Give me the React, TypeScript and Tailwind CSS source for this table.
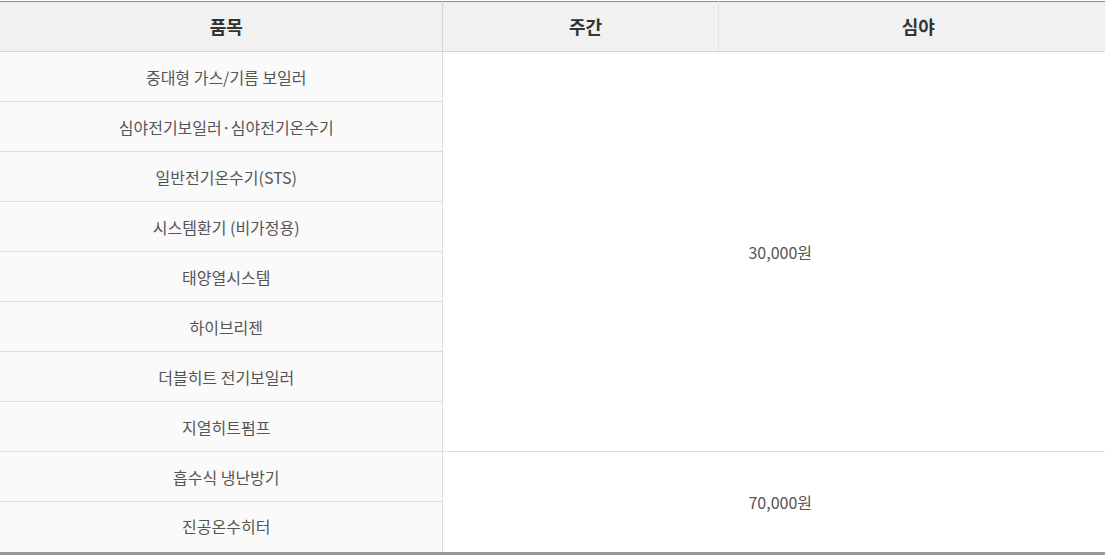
import React from "react";

const groupA = [
  "중대형 가스/기름 보일러",
  "심야전기보일러·심야전기온수기",
  "일반전기온수기(STS)",
  "시스템환기 (비가정용)",
  "태양열시스템",
  "하이브리젠",
  "더블히트 전기보일러",
  "지열히트펌프",
];

const groupB = ["흡수식 냉난방기", "진공온수히터"];

const itemCell =
  "bg-[#fafafa] pl-[11px] text-center text-[16px] text-[#555] border-r border-[#dcdcdc]";

const priceCell =
  "bg-white pl-[13px] text-center text-[16px] text-[#555] border-b border-[#dcdcdc]";

const App: React.FC = () => {
  return (
    <div
      className="w-[1105px] h-[556px] bg-white pt-[1px]"
      style={{ fontFamily: '"Noto Sans CJK KR", "Noto Sans", sans-serif' }}
    >
      <table className="w-full border-collapse table-fixed border-t border-t-[#8c8c8c] border-b-[3px] border-b-[#999]">
        <colgroup>
          <col className="w-[442px]" />
          <col className="w-[276px]" />
          <col />
        </colgroup>
        <thead>
          <tr className="h-[50px] bg-[#f1f1f1]">
            <th className="pl-[11px] text-[18px] font-bold text-[#333] border-b border-r border-[#d4d4d4]">
              품목
            </th>
            <th className="pl-[11px] text-[18px] font-bold text-[#333] border-b border-r border-b-[#d4d4d4] border-r-[#e2e2e2]">
              주간
            </th>
            <th className="pl-[13px] text-[18px] font-bold text-[#333] border-b border-[#d4d4d4]">
              심야
            </th>
          </tr>
        </thead>
        <tbody>
          {groupA.map((name, i) => (
            <tr key={name}>
              <td className={itemCell + " h-[50px] border-b"}>{name}</td>
              {i === 0 && (
                <td colSpan={2} rowSpan={groupA.length} className={priceCell}>
                  30,000원
                </td>
              )}
            </tr>
          ))}
          {groupB.map((name, i) => (
            <tr key={name}>
              <td
                className={
                  i === groupB.length - 1
                    ? itemCell + " h-[52px] pb-[2px]"
                    : itemCell + " h-[50px] border-b"
                }
              >
                {name}
              </td>
              {i === 0 && (
                <td colSpan={2} rowSpan={groupB.length} className={priceCell}>
                  70,000원
                </td>
              )}
            </tr>
          ))}
        </tbody>
      </table>
    </div>
  );
};

export default App;
